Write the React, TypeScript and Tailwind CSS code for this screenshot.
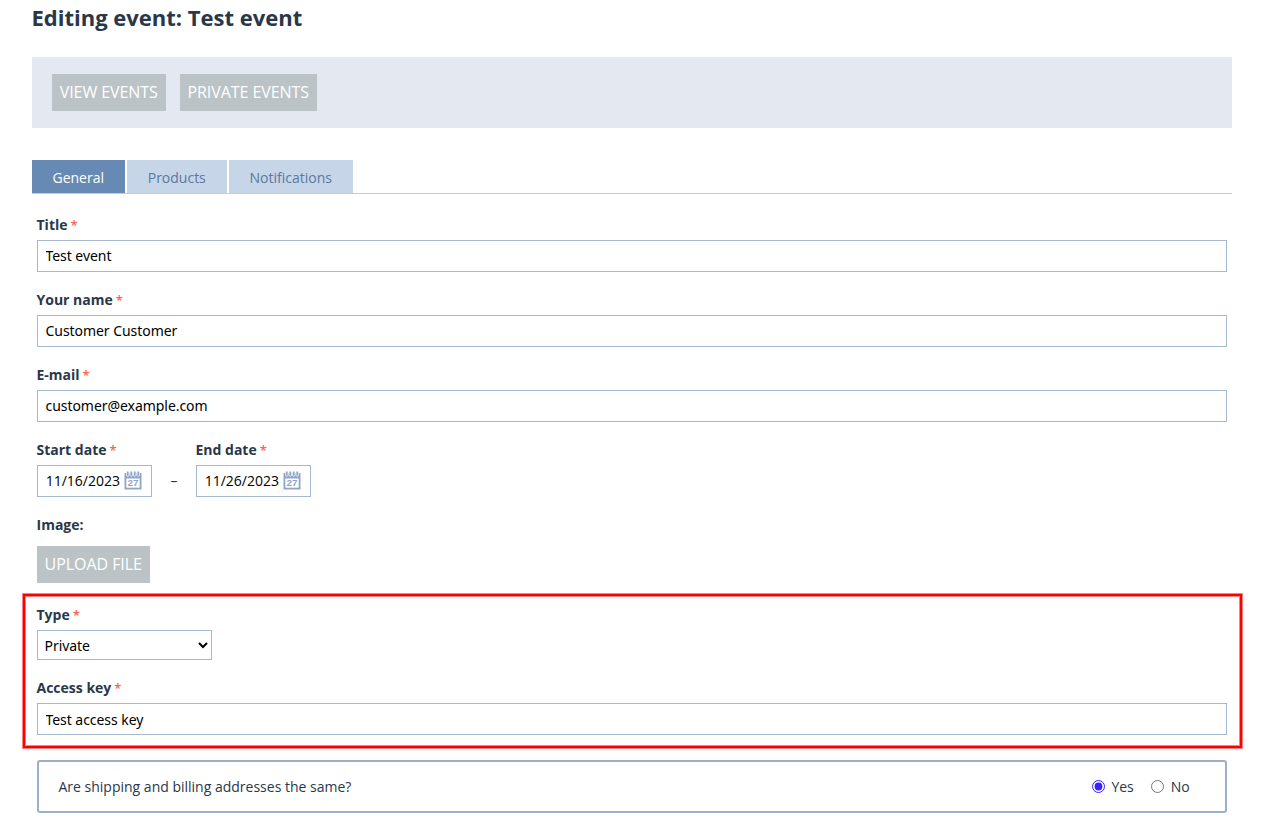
import type { ReactNode } from "react";

function Label({ text, required = true }: { text: string; required?: boolean }) {
  return (
    <div className="-ml-[0.5px] flex h-[30px] items-center text-sm font-bold text-[#2a3749]">
      <span>{text}</span>
      {required && <span className="ml-[3px] text-[13px] font-semibold text-[#ff5e52]">*</span>}
    </div>
  );
}

function TextField({ label, value, pad = "pb-[2px]" }: { label: string; value: string; pad?: string }) {
  return (
    <div>
      <Label text={label} />
      <input
        type="text"
        defaultValue={value}
        className={`block h-8 w-full border border-[#a5b8cf] bg-white pl-[7.5px] pr-2 font-['Noto_Sans',sans-serif] text-sm tracking-[-0.05px] text-black outline-none ${pad}`}
      />
    </div>
  );
}

function CalendarIcon() {
  return (
    <svg width="18" height="19" viewBox="0 0 18 19" className="mb-[2px] shrink-0">
      <path d="M0.5 2H17.5V18.5H0.5Z" fill="#8ea6c8" />
      <path d="M2.3 7.5H15.7V16.7H2.3Z" fill="#fff" />
      <path d="M2.2 0H5.3V4.6L3.75 5.8L2.2 4.6ZM5.7 0H8.8V4.6L7.25 5.8L5.7 4.6ZM9.2 0H12.3V4.6L10.75 5.8L9.2 4.6ZM12.7 0H15.8V4.6L14.25 5.8L12.7 4.6Z" fill="#fff" />
      <path d="M3.75 0.5V4.7M7.25 0.5V4.7M10.75 0.5V4.7M14.25 0.5V4.7" stroke="#8ea6c8" strokeWidth="1.8" />
      <text x="9" y="15" textAnchor="middle" fontSize="8.8" textLength="11" lengthAdjust="spacingAndGlyphs" fontWeight="700" fontFamily="Liberation Sans, sans-serif" fill="#8ea6c8">
        27
      </text>
    </svg>
  );
}

function DateField({ label, value }: { label: string; value: string }) {
  return (
    <div className="w-[115px]">
      <Label text={label} />
      <div className="flex h-8 items-center justify-between border border-[#a5b8cf] pl-[7.7px] pr-[9px] text-sm text-black">
        <span>{value}</span>
        <CalendarIcon />
      </div>
    </div>
  );
}

function Button({ children, width }: { children: ReactNode; width: string }) {
  return (
    <button className={`flex h-[37px] items-center justify-center whitespace-nowrap bg-[#bbc3c7] pb-[2px] pr-[0.5px] text-base tracking-[-0.06px] text-white ${width}`}>
      {children}
    </button>
  );
}

function Radio({ label, checked }: { label: string; checked: boolean }) {
  return (
    <label className="flex items-center gap-[6.3px]">
      <input type="radio" name="same-address" defaultChecked={checked} className="m-0 size-[13px] accent-[#3922ff]" />
      <span>{label}</span>
    </label>
  );
}

export default function App() {
  return (
    <main className="h-[832px] overflow-hidden bg-white pl-8 pr-[51px] font-['Open_Sans','Noto_Sans',sans-serif] text-sm text-[#2a3749]">
      <h1 className="-ml-[0.5px] flex h-[57px] items-start pt-[2px] text-[22px] leading-[30px] font-bold">Editing event: Test event</h1>
      <div className="flex h-[71px] gap-[14px] bg-[#e4e9f1] pl-5 pt-[17px]">
        <Button width="w-[114px]">VIEW EVENTS</Button>
        <Button width="w-[137px]">PRIVATE EVENTS</Button>
      </div>

      <nav className="mt-8 flex h-[34px] gap-[2px] border-b border-[#c0cbdb] text-[#59799f]">
        <div className="flex w-[93px] items-center justify-center bg-[#678ab4] pt-[2px] pr-[0.5px] text-white">General</div>
        <div className="flex w-[100px] items-center justify-center bg-[#c7d5e8] pt-[2px] pr-[0.5px]">Products</div>
        <div className="flex w-[124px] items-center justify-center bg-[#c7d5e8] pt-[2px] pr-[0.5px]">Notifications</div>
      </nav>

      <div className="mt-4 px-[5px]">
        <div className="flex flex-col gap-[13px]">
          <TextField label="Title" value="Test event" />
          <TextField label="Your name" value="Customer Customer" />
          <TextField label="E-mail" value="customer@example.com" />
          <div className="flex">
            <DateField label="Start date" value="11/16/2023" />
            <div className="flex h-8 w-11 items-center justify-center self-end">–</div>
            <DateField label="End date" value="11/26/2023" />
          </div>
          <div>
            <Label text="Image:" required={false} />
            <div className="pt-[6px]">
              <Button width="w-[113px]">UPLOAD FILE</Button>
            </div>
          </div>
        </div>

        <section className="-ml-[14px] -mr-[15px] mt-[11px] h-[154px] border-2 border-[#ff0000] pl-3 pr-[13px] pt-1 shadow-[0_0_0_1px_#ff8080,inset_0_0_0_1px_#ff8080]">
          <Label text="Type" />
          <select className="mb-[13px] block h-[30px] w-[175px] border border-[#a5b8cf] bg-white pl-[2.5px] pr-[3px] font-['Noto_Sans',sans-serif] text-sm tracking-[-0.05px] text-black">
            <option>Private</option>
          </select>
          <TextField label="Access key" value="Test access key" pad="pb-0" />
        </section>

        <section className="mt-3 flex h-[53px] items-center justify-between rounded-[3px] border-2 border-[#9db0cb] pl-[19.5px] pr-[35.3px]">
          <span>Are shipping and billing addresses the same?</span>
          <div className="flex gap-[17.7px]">
            <Radio label="Yes" checked={true} />
            <Radio label="No" checked={false} />
          </div>
        </section>
      </div>
    </main>
  );
}
